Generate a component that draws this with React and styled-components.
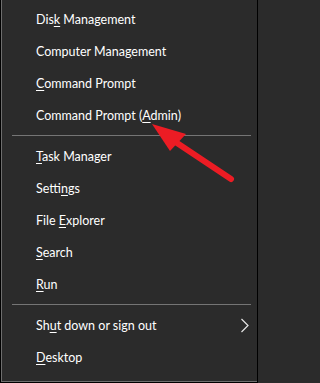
import React from 'react'
import styled, { createGlobalStyle } from 'styled-components';

const Global = createGlobalStyle`
    html, body {
        margin: 0;
        padding: 0;
        background: #2b2b2b;
    }
`;

const Frame = styled.div`
    position: relative;
    width: 258px;
    height: 383px;
    box-sizing: border-box;
    border: 1px solid #000;
    border-top: none;
    background: #2b2b2b;
    font-family: Lato, "Noto Sans", sans-serif;
    font-size: 12.5px;
    color: #fff;
`;

const Menu = styled.div`
    height: 100%;
    box-sizing: border-box;
    border-left: 1px solid #6e6e6e;
    border-bottom: 1px solid #6e6e6e;
    padding: 3px 0 8px 0;
    display: flex;
    flex-direction: column;
`;

const Item = styled.div`
    height: 32px;
    flex-shrink: 0;
    display: flex;
    align-items: center;
    justify-content: space-between;
    padding-left: 34px;
    padding-right: 8px;
    white-space: nowrap;
`;

const Key = styled.span`
    text-decoration: underline;
    text-decoration-thickness: 1px;
    text-underline-offset: 2px;
`;

const Separator = styled.div`
    height: 9px;
    flex-shrink: 0;
    display: flex;
    align-items: center;
    margin: 0 6px 0 10px;
    &::after {
        content: '';
        flex: 1;
        height: 1px;
        background: #757575;
    }
`;

const Chevron = styled.svg`
    width: 9px;
    height: 15px;
    display: block;
`;

const Arrow = styled.svg`
    position: absolute;
    left: 0;
    top: 0;
    width: 258px;
    height: 383px;
    pointer-events: none;
`;

const Label = ({ text, k }) => {
    const i = text.indexOf(k);
    return (
        <span>
            {text.slice(0, i)}<Key>{k}</Key>{text.slice(i + k.length)}
        </span>
    );
};

const groups = [
    [
        ['Disk Management', 'k'],
        ['Computer Management', 'g'],
        ['Command Prompt', 'C'],
        ['Command Prompt (Admin)', 'A'],
    ],
    [
        ['Task Manager', 'T'],
        ['Settings', 'n'],
        ['File Explorer', 'E'],
        ['Search', 'S'],
        ['Run', 'R'],
    ],
    [
        ['Shut down or sign out', 'u', true],
        ['Desktop', 'D'],
    ],
];

export default function App() {
    return (
        <Frame>
            <Global />
            <Menu>
                {groups.map((g, gi) => (
                    <React.Fragment key={gi}>
                        {gi > 0 && <Separator />}
                        {g.map(([text, k, sub]) => (
                            <Item key={text}>
                                <Label text={text} k={k} />
                                {sub && (
                                    <Chevron viewBox="0 0 9 15">
                                        <polyline points="1.5,1 8,7.5 1.5,14" fill="none" stroke="#e6e6e6" strokeWidth="1.2" />
                                    </Chevron>
                                )}
                            </Item>
                        ))}
                    </React.Fragment>
                ))}
            </Menu>
            <Arrow viewBox="0 0 258 383">
                <line x1="173" y1="141" x2="230" y2="179" stroke="#ec1c24" strokeWidth="6" strokeLinecap="round" />
                <polygon points="151,124 185,134 169,151" fill="#ec1c24" />
            </Arrow>
        </Frame>
    )
}
